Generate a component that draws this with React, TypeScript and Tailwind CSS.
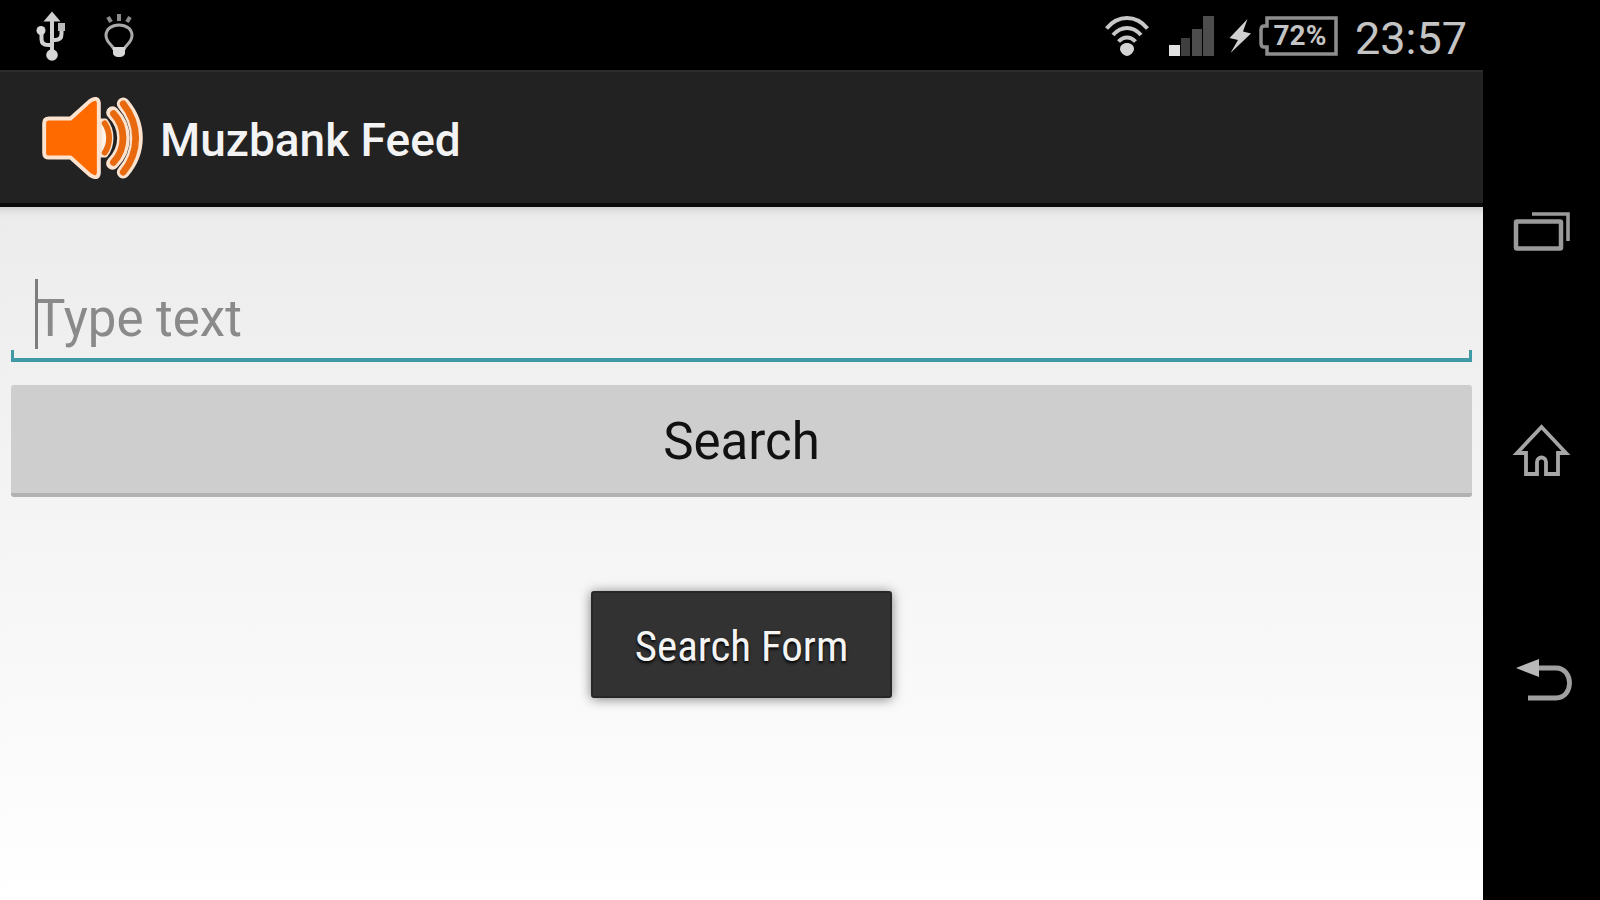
import type { ReactNode } from 'react';

function UsbIcon() {
  return (
    <svg className="h-[50px] w-8" viewBox="0 0 32 50" fill="none" stroke="#d0d0d0" strokeWidth="4" aria-label="USB connected">
      <path d="M16 6v38M16 34H12c-4 0-6.500-2-6.500-6V20M16 29h3c4 0 6.500-2 6.500-6V16" />
      <path d="M16 .5l8.500 10H7.500z" fill="#d0d0d0" stroke="none" />
      <circle cx="5" cy="19.500" r="4.500" fill="#d8d8d8" stroke="none" />
      <rect x="22" y="12" width="7" height="8" fill="#bbb" stroke="none" />
      <circle cx="16" cy="44" r="5.800" fill="#d8d8d8" stroke="none" />
    </svg>
  );
}

function BulbIcon() {
  return (
    <svg className="h-12 w-8" viewBox="0 0 32 48" fill="none" stroke="#aaa" strokeWidth="3" aria-label="Illumination">
      <path d="M5 5l3 5M16 2v7M27 5l-3 5" stroke="#8c8c8c" strokeWidth="4" />
      <path d="M11 38c0-4-8-7-8-14.500C3 17 9 13 16 13s13 4 13 10.500C29 31 21 34 21 38" />
      <path d="M10 35h12v6c0 2.500-2.500 4-6 4s-6-1.500-6-4z" fill="#d8d8d8" stroke="none" />
    </svg>
  );
}

function WifiIcon() {
  return (
    <svg className="h-[42px] w-11" viewBox="0 0 44 42" fill="none" stroke="#c8c8c8" strokeWidth="4" aria-label="Wi-Fi">
      <path d="M1.500 13.500C13-.5 31-.5 42.500 13.500" />
      <path d="M8 20c8-9.500 20-9.500 28 0" />
      <path d="M13.500 26.500c5-5.500 12-5.500 17 0" />
      <path d="M22 28c4 0 7 2.500 7 6 0 3-4 7-7 7s-7-4-7-7c0-3.500 3-6 7-6z" fill="#d4d4d4" stroke="none" />
    </svg>
  );
}

function SignalIcon() {
  return (
    <svg className="h-10 w-[46px]" viewBox="0 0 46 40" fill="#4d4d4d" aria-label="Signal">
      <rect x="0" y="29" width="11" height="11" fill="#e2e2e2" />
      <rect x="12" y="22" width="9" height="18" fill="#3f3f3f" />
      <rect x="23" y="13" width="10" height="27" />
      <rect x="34" y="0" width="11" height="40" />
    </svg>
  );
}

function BoltIcon() {
  return (
    <svg className="h-[34px] w-[22px]" viewBox="0 0 22 34" fill="#d0d0d0" aria-label="Charging">
      <path d="M18.500 0L.5 19l8.500 2L1.500 34 22 14.500l-8-2z" />
    </svg>
  );
}

function Battery() {
  return (
    <div className="relative flex h-10 w-[80px] items-center justify-center pl-[2px]">
      <svg className="absolute inset-0 h-10 w-[80px]" viewBox="0 0 80 40" fill="none" stroke="#8e8e8e" strokeWidth="3.500" aria-hidden="true">
        <path d="M8 2h69v36H8v-7H5q-3 0-3-4V14q0-4 3-4h3z" />
      </svg>
      <span className="relative text-[28px] leading-none font-bold text-[#c4c4c4]">72%</span>
    </div>
  );
}

function SpeakerLogo() {
  return (
    <svg className="h-[82px] w-[104px]" viewBox="0 0 104 84" fill="none" strokeLinejoin="round" aria-hidden="true">
      <path d="M84 7C102 28 102 56 84 77" stroke="#fbe3d0" strokeWidth="13" strokeLinecap="round" />
      <path d="M84 7C101 28 101 56 84 77" stroke="#e9690f" strokeWidth="7" strokeLinecap="round" />
      <path d="M73 16C88 31 88 53 73 68" stroke="#fbe3d0" strokeWidth="13" strokeLinecap="round" />
      <path d="M74 17C87 31 87 53 74 67" stroke="#e9690f" strokeWidth="7" strokeLinecap="round" />
      <path d="M60 24h6C74 34 74 50 66 60h-6z" fill="#fff3ea" stroke="#fbe3d0" strokeWidth="4" />
      <path d="M65 27C71 36 71 48 65 57" stroke="#e9690f" strokeWidth="6" strokeLinecap="round" />
      <path d="M8 22h22L50 4q8-5 9 2v72q-1 7-9 2L30 62H8q-5 0-5-5V27q0-5 5-5z" fill="#ff6a00" stroke="#fbe3d0" strokeWidth="4" />
    </svg>
  );
}

function NavButton({ label, children }: { label: string; children: ReactNode }) {
  return (
    <button type="button" aria-label={label} className="flex h-[60px] w-[60px] items-center justify-center">
      {children}
    </button>
  );
}

function RecentsIcon() {
  return (
    <svg className="h-[42px] w-[60px]" viewBox="0 0 60 42" fill="none" stroke="#9a9a9a">
      <rect x="4" y="11.500" width="45" height="27" rx="1" strokeWidth="4.500" />
      <path d="M20 4h36v27" strokeWidth="3.600" />
    </svg>
  );
}

function HomeIcon() {
  return (
    <svg className="h-[54px] w-[60px]" viewBox="0 0 60 54" fill="none" stroke="#a6a6a6" strokeWidth="3.800">
      <path d="M29.500 3L5 29h9v21h11V38c0-6 9-6 9 0v12h12V29h8z" />
    </svg>
  );
}

function BackIcon() {
  return (
    <svg className="h-[44px] w-[60px]" viewBox="0 0 60 44" fill="none" stroke="#a0a0a0" strokeWidth="4.800">
      <path d="M24 10h20c18 0 18 30 0 30H16" />
      <path d="M4 10L27 1v18z" fill="#b8b8b8" stroke="none" />
    </svg>
  );
}

export default function App() {
  return (
    <div className="flex min-h-screen bg-black font-['Roboto','Liberation_Sans',sans-serif]">
      <div className="flex min-w-0 flex-1 flex-col">
        <div className="flex h-[70px] items-center justify-between pt-[2px] pr-4 pl-9 text-[#c4c4c4]">
          <div className="flex items-center gap-[35px]">
            <UsbIcon />
            <BulbIcon />
          </div>
          <div className="flex items-center">
            <WifiIcon />
            <div className="ml-5"><SignalIcon /></div>
            <div className="ml-[14px]"><BoltIcon /></div>
            <div className="ml-2"><Battery /></div>
            <time className="ml-4 pt-1 text-[45px] leading-none">23:57</time>
          </div>
        </div>

        <header className="flex h-[137px] items-center gap-4 border-t-2 border-b-4 border-t-[#2c2c2c] border-b-[#0a0a0a] bg-[#222] pl-10">
          <SpeakerLogo />
          <h1 className="pt-1 text-[46px] leading-none font-medium text-[#f3f3f3]">Muzbank Feed</h1>
        </header>

        <main className="flex flex-1 flex-col bg-linear-to-b from-[#ececec] to-white px-[11px] shadow-[inset_0_10px_8px_-8px_#c8c8c8]">
          <form className="flex flex-col" onSubmit={(e) => e.preventDefault()}>
            <div className="relative mt-[67px] flex h-[88px] flex-col">
              <input
                type="text"
                aria-label="Type text"
                placeholder="Type text"
                className="h-[76px] w-full bg-transparent pt-3 pl-6 text-[51px] leading-none text-[#222] placeholder-[#8a8a8a] outline-none"
              />
              <span className="absolute top-[5px] left-6 h-[70px] w-[3px] bg-[#7d7d7d]" />
              <span className="h-3 w-full border-x-3 border-b-4 border-[#3f9aa5]" />
            </div>
            <button
              type="submit"
              className="mt-[23px] h-28 rounded-[3px] border-b-4 border-[#b2b2b2] bg-[#cecece] pt-1 text-[51px] leading-none text-[#111]"
            >
              Search
            </button>
          </form>
          <div
            role="status"
            className="mt-[94px] flex h-[107px] items-center self-center rounded-[3px] border-2 border-[#272727] bg-[#323232] px-[42px] pt-1 font-['Roboto_Condensed','Roboto',sans-serif] text-[43px] leading-none text-[#f4f4f4] shadow-[0_1px_12px_rgba(0,0,0,0.5)] text-shadow-[0_2px_3px_#000]"
          >
            Search Form
          </div>
        </main>
      </div>

      <nav aria-label="System" className="flex w-[117px] flex-col items-center pt-[201px]">
        <NavButton label="Recent apps"><RecentsIcon /></NavButton>
        <div className="mt-[160px]"><NavButton label="Home"><HomeIcon /></NavButton></div>
        <div className="mt-[169px]"><NavButton label="Back"><BackIcon /></NavButton></div>
      </nav>
    </div>
  );
}
